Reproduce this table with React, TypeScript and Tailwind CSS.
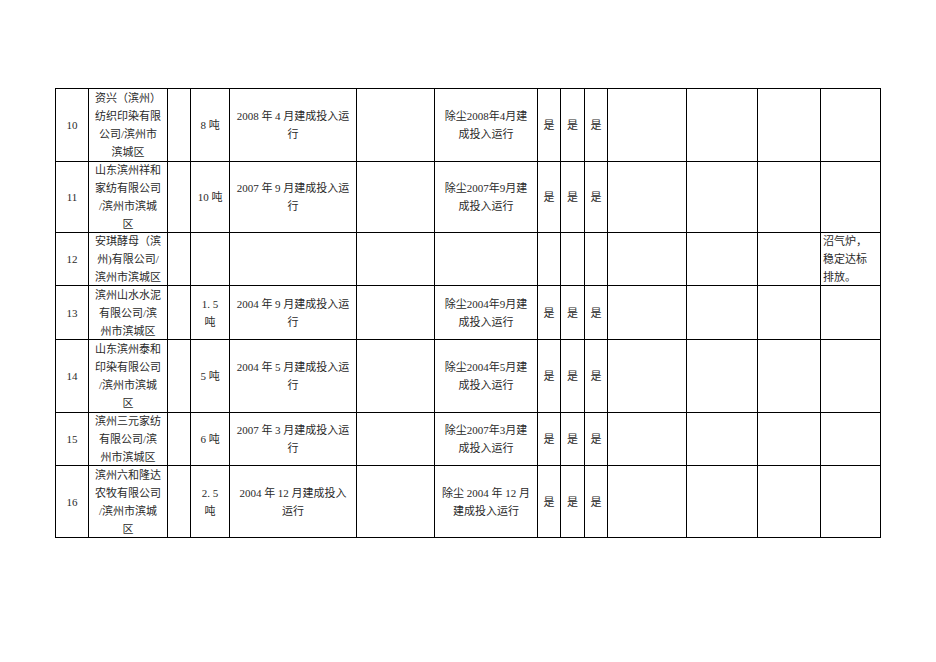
import React from "react";

type Row = {
  num: string;
  hc: string;
  name: string[];
  cap: string[];
  date: string[];
  dust: string[];
  yes: boolean;
  note?: string[];
};

const rows: Row[] = [
  { num: "10", hc: "h-[72px]", name: ["资兴（滨州）", "纺织印染有限", "公司/滨州市", "滨城区"], cap: ["8 吨"], date: ["2008 年 4 月建成投入运", "行"], dust: ["除尘2008年4月建", "成投入运行"], yes: true },
  { num: "11", hc: "h-[70px]", name: ["山东滨州祥和", "家纺有限公司", "/滨州市滨城", "区"], cap: ["10 吨"], date: ["2007 年 9 月建成投入运", "行"], dust: ["除尘2007年9月建", "成投入运行"], yes: true },
  { num: "12", hc: "h-[52px]", name: ["安琪酵母（滨", "州)有限公司/", "滨州市滨城区"], cap: [], date: [], dust: [], yes: false, note: ["沼气炉，", "稳定达标", "排放。"] },
  { num: "13", hc: "h-[53px]", name: ["滨州山水水泥", "有限公司/滨", "州市滨城区"], cap: ["1. 5", "吨"], date: ["2004 年 9 月建成投入运", "行"], dust: ["除尘2004年9月建", "成投入运行"], yes: true },
  { num: "14", hc: "h-[72px]", name: ["山东滨州泰和", "印染有限公司", "/滨州市滨城", "区"], cap: ["5 吨"], date: ["2004 年 5 月建成投入运", "行"], dust: ["除尘2004年5月建", "成投入运行"], yes: true },
  { num: "15", hc: "h-[52px]", name: ["滨州三元家纺", "有限公司/滨", "州市滨城区"], cap: ["6 吨"], date: ["2007 年 3 月建成投入运", "行"], dust: ["除尘2007年3月建", "成投入运行"], yes: true },
  { num: "16", hc: "h-[71px]", name: ["滨州六和隆达", "农牧有限公司", "/滨州市滨城", "区"], cap: ["2. 5", "吨"], date: ["2004 年 12 月建成投入", "运行"], dust: ["除尘 2004 年 12 月", "建成投入运行"], yes: true },
];

const widthClasses = [
  "w-[33px]",
  "w-[79px]",
  "w-[23px]",
  "w-[39px]",
  "w-[127px]",
  "w-[78px]",
  "w-[103px]",
  "w-[23px]",
  "w-[24px]",
  "w-[23px]",
  "w-[79px]",
  "w-[71px]",
  "w-[63px]",
  "w-[60px]",
];

function Cell({ hc, lines, left }: { hc: string; lines?: string[]; left?: boolean }) {
  return (
    <td className="border border-black p-0 align-middle">
      <div
        className={clsxJoin(
          "flex flex-col justify-center overflow-visible",
          hc,
          left ? "items-start pl-[2px]" : "items-center"
        )}
      >
        {(lines ?? []).map((l, i) => (
          <div key={i} className="whitespace-nowrap">
            {l}
          </div>
        ))}
      </div>
    </td>
  );
}

function clsxJoin(...parts: string[]) {
  return parts.join(" ");
}

export default function App() {
  return (
    <div className="w-[936px] h-[662px] bg-white pt-[88px] pl-[55px] text-[#2a2a2a] text-[11px] leading-[18px] font-['Liberation_Serif','Noto_Sans_CJK_SC',serif]">
      <table className="table-fixed border-collapse w-[825px]">
        <colgroup>
          {widthClasses.map((w, i) => (
            <col key={i} className={w} />
          ))}
        </colgroup>
        <tbody>
          {rows.map((r) => {
            const y = r.yes ? ["是"] : [];
            return (
              <tr key={r.num}>
                <Cell hc={r.hc} lines={[r.num]} />
                <Cell hc={r.hc} lines={r.name} />
                <Cell hc={r.hc} />
                <Cell hc={r.hc} lines={r.cap} />
                <Cell hc={r.hc} lines={r.date} />
                <Cell hc={r.hc} />
                <Cell hc={r.hc} lines={r.dust} />
                <Cell hc={r.hc} lines={y} />
                <Cell hc={r.hc} lines={y} />
                <Cell hc={r.hc} lines={y} />
                <Cell hc={r.hc} />
                <Cell hc={r.hc} />
                <Cell hc={r.hc} />
                <Cell hc={r.hc} lines={r.note} left />
              </tr>
            );
          })}
        </tbody>
      </table>
    </div>
  );
}
